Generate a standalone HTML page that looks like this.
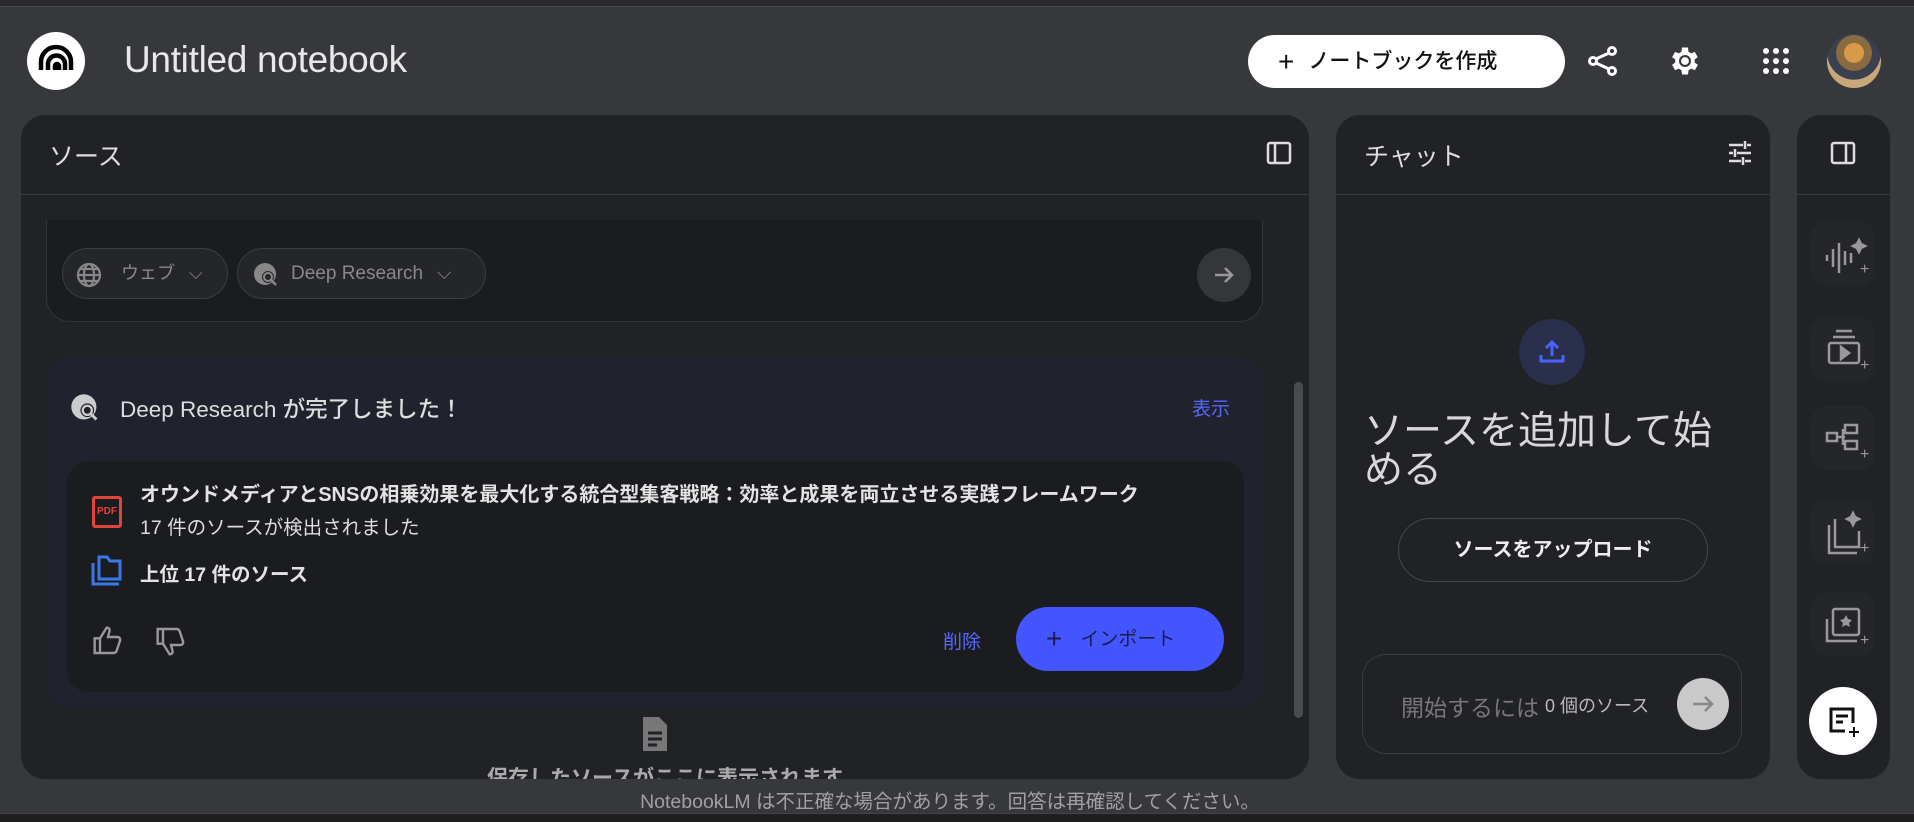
<!DOCTYPE html>
<html><head><meta charset="utf-8"><style>
*{box-sizing:border-box;margin:0;padding:0}
body{width:1914px;height:822px;background:#37383c;font-family:"Liberation Sans","Noto Sans CJK JP",sans-serif;color:#e3e3e3;position:relative;overflow:hidden}
.abs{position:absolute}
.panel{position:absolute;background:#212226;border-radius:24px;overflow:hidden}
.hdr{position:absolute;left:0;right:0;top:0;height:80px;border-bottom:1px solid #3a3b3f}
svg{display:block}
</style></head><body>
<div class="abs" style="left:0;top:0;width:1914px;height:7px;background:#2a2a2c;border-bottom:1px solid #4a4a4a"></div>
<div class="abs" style="left:0;top:813px;width:1914px;height:9px;background:#1f1f20;border-top:1px solid #444"></div>

<div class="abs" style="left:27px;top:32px;width:58px;height:58px;border-radius:50%;background:#fff">
<svg width="58" height="58" viewBox="0 0 58 58"><g fill="none" stroke="#000" stroke-width="4.5"><path d="M14 38 V30 A15 15 0 0 1 44 30 V38"/><path d="M21 38 V32 A8.5 8.5 0 0 1 38 32 V38"/><path d="M28 38 V34 A2 2 0 0 1 32 34 V38"/></g></svg></div>
<div class="abs" style="left:124px;top:39px;font-size:37px;color:#e8e8e8;letter-spacing:-0.3px">Untitled notebook</div>

<div class="abs" style="left:1248px;top:35px;width:317px;height:53px;border-radius:27px;background:#fff;color:#111;font-size:21px;line-height:53px;padding-left:30px;font-weight:500"><span style="font-size:28px;vertical-align:-3px;margin-right:14px">+</span>ノートブックを作成</div>
<svg class="abs" style="left:1586px;top:44px" width="34" height="34" viewBox="0 0 34 34"><g fill="none" stroke="#fff" stroke-width="3"><circle cx="26" cy="7" r="3.5"/><circle cx="26" cy="27" r="3.5"/><circle cx="7" cy="17" r="3.5"/><path d="M10 15 L23 9 M10 19 L23 25"/></g></svg>
<svg class="abs" style="left:1667px;top:43px" width="36" height="36" viewBox="0 0 24 24"><path fill="#fff" d="M19.4 13a7.5 7.5 0 0 0 0-2l2.1-1.6-2-3.5-2.5 1a7 7 0 0 0-1.7-1L15 3h-4l-.4 2.9a7 7 0 0 0-1.7 1l-2.5-1-2 3.5L6.5 11a7.5 7.5 0 0 0 0 2l-2.1 1.6 2 3.5 2.5-1a7 7 0 0 0 1.7 1L11 21h4l.4-2.9a7 7 0 0 0 1.7-1l2.5 1 2-3.5zM13 16a4 4 0 1 1 0-8 4 4 0 0 1 0 8z" transform="translate(-1 0)"/><circle cx="12" cy="12" r="2.6" fill="#fff"/></svg>
<svg class="abs" style="left:1762px;top:47px" width="28" height="28" viewBox="0 0 28 28"><g fill="#fff"><circle cx="4" cy="4" r="3"/><circle cx="14" cy="4" r="3"/><circle cx="24" cy="4" r="3"/><circle cx="4" cy="14" r="3"/><circle cx="14" cy="14" r="3"/><circle cx="24" cy="14" r="3"/><circle cx="4" cy="24" r="3"/><circle cx="14" cy="24" r="3"/><circle cx="24" cy="24" r="3"/></g></svg>
<div class="abs" style="left:1827px;top:34px;width:54px;height:54px;border-radius:50%;background:radial-gradient(circle at 50% 35%,#d89a48 0 22%,#8a6a40 23% 40%,#3a4050 41% 60%,#c8a878 61%)"></div>

<div class="panel" style="left:21px;top:115px;width:1288px;height:664px">
 <div class="hdr"><div class="abs" style="left:28px;top:22px;font-size:25px;color:#ddd">ソース</div>
 <svg class="abs" style="left:1245px;top:25px" width="26" height="26" viewBox="0 0 26 26"><g fill="none" stroke="#ddd" stroke-width="2.5"><rect x="2" y="3" width="22" height="20" rx="2"/><path d="M9 3v20"/></g></svg></div>
 <div class="abs" style="left:25px;top:105px;width:1217px;height:102px;background:#1b1c1f;border:1px solid #34353a;border-top:none;border-radius:0 0 24px 24px">
  <div class="abs" style="left:15px;top:28px;width:166px;height:51px;border:1px solid #3c3d41;border-radius:26px;background:#25262a;color:#888;font-size:18px;line-height:49px;padding-left:58px">ウェブ<span style="margin-left:14px">⌵</span></div>
  <svg class="abs" style="left:29px;top:42px" width="26" height="26" viewBox="0 0 26 26"><g fill="none" stroke="#888" stroke-width="2.2"><circle cx="13" cy="13" r="11"/><ellipse cx="13" cy="13" rx="5" ry="11"/><path d="M2 13h22M4 7h18M4 19h18"/></g></svg>
  <div class="abs" style="left:190px;top:28px;width:249px;height:51px;border:1px solid #3c3d41;border-radius:26px;background:#25262a;color:#888;font-size:19px;line-height:49px;padding-left:53px">Deep Research<span style="margin-left:14px">⌵</span></div>
  <svg class="abs" style="left:205px;top:41px" width="28" height="28" viewBox="0 0 28 28"><circle cx="13" cy="13" r="11" fill="#888"/><circle cx="16" cy="16" r="6" fill="#25262a"/><circle cx="16" cy="16" r="4" fill="none" stroke="#888" stroke-width="2"/><path d="M19 19l5 5" stroke="#888" stroke-width="2.5"/></svg>
  <div class="abs" style="left:1150px;top:28px;width:54px;height:54px;border-radius:50%;background:#35363a"></div>
  <svg class="abs" style="left:1163px;top:41px" width="28" height="28" viewBox="0 0 28 28"><path d="M5 14h17M15 7l7 7-7 7" fill="none" stroke="#999" stroke-width="2.5"/></svg>
 </div>
 <div class="abs" style="left:25px;top:240px;width:1217px;height:353px;background:#20222d;border-radius:24px">
  <svg class="abs" style="left:23px;top:37px" width="32" height="32" viewBox="0 0 28 28"><circle cx="13" cy="13" r="11" fill="#ccc"/><circle cx="16" cy="16" r="6" fill="#20222d"/><circle cx="16" cy="16" r="4" fill="none" stroke="#ccc" stroke-width="2"/><path d="M19 19l5 5" stroke="#ccc" stroke-width="2.5"/></svg>
  <div class="abs" style="left:74px;top:37px;font-size:22.5px;color:#ddd;font-weight:500">Deep Research が完了しました！</div>
  <div class="abs" style="left:1146px;top:39px;font-size:19px;color:#5468ff">表示</div>
  <div class="abs" style="left:21px;width:1177px;height:231px;background:#1b1c20;border-radius:22px;top:106px">
   <div class="abs" style="left:25px;top:35px;width:30px;height:32px;border:3px solid #e0443a;border-radius:3px;color:#e0443a;font-size:10px;font-weight:bold;line-height:26px;text-align:center">PDF</div>
   <div class="abs" style="left:73px;top:17px;font-size:20px;color:#e3e3e3;font-weight:600">オウンドメディアとSNSの相乗効果を最大化する統合型集客戦略：効率と成果を両立させる実践フレームワーク</div>
   <div class="abs" style="left:73px;top:50px;font-size:19.5px;color:#ddd">17 件のソースが検出されました</div>
   <svg class="abs" style="left:19px;top:92px" width="40" height="36" viewBox="0 0 40 36"><g fill="none" stroke="#3b78e7" stroke-width="3"><path d="M13 4h8l3 4h10v18H13z"/><path d="M7 10v21h26"/></g></svg>
   <div class="abs" style="left:73px;top:97px;font-size:19.5px;color:#e3e3e3;font-weight:600">上位 17 件のソース</div>
   <svg class="abs" style="left:25px;top:164px" width="32" height="32" viewBox="0 0 24 24"><path d="M2 10h4v11H2zM6 10l5-8c2 0 2.5 1.5 2 3l-1 4h7c1.5 0 2.5 1.3 2 2.8l-2.5 7.5c-.4 1-1.2 1.7-2.3 1.7H6" fill="none" stroke="#999" stroke-width="1.8"/></svg>
   <svg class="abs" style="left:88px;top:164px" width="32" height="32" viewBox="0 0 24 24"><g transform="matrix(1 0 0 -1 0 24)"><path d="M2 10h4v11H2zM6 10l5-8c2 0 2.5 1.5 2 3l-1 4h7c1.5 0 2.5 1.3 2 2.8l-2.5 7.5c-.4 1-1.2 1.7-2.3 1.7H6" fill="none" stroke="#999" stroke-width="1.8"/></g></svg>
   <div class="abs" style="left:876px;top:166px;font-size:19px;color:#5468ff">削除</div>
   <div class="abs" style="left:949px;top:146px;width:208px;height:64px;border-radius:32px;background:#4355ff;color:#1a1d4a;font-size:19px;line-height:64px;padding-left:30px"><span style="font-size:28px;vertical-align:-3px;margin-right:18px">+</span>インポート</div>
  </div>
 </div>
 <div class="abs" style="left:1273px;top:267px;width:9px;height:336px;background:#4a4b4f;border-radius:5px"></div>
 <svg class="abs" style="left:620px;top:600px" width="28" height="38" viewBox="0 0 28 38"><path d="M2 2h16l8 8v26H2z" fill="#777"/><path d="M7 18h14M7 24h14M7 30h9" stroke="#212226" stroke-width="3"/></svg>
 <div class="abs" style="left:0;width:1288px;top:647px;text-align:center;font-size:21px;color:#aaa;font-weight:600">保存したソースがここに表示されます</div>
</div>

<div class="abs" style="left:0;width:1914px;top:785px;text-align:center;font-size:19.5px;color:#a0a0a0;padding-right:14px">NotebookLM は不正確な場合があります。回答は再確認してください。</div>

<div class="panel" style="left:1336px;top:115px;width:434px;height:664px">
 <div class="hdr"><div class="abs" style="left:28px;top:22px;font-size:25px;color:#ddd">チャット</div>
 <svg class="abs" style="left:391px;top:25px" width="26" height="26" viewBox="0 0 26 26"><g stroke="#ddd" stroke-width="2.5"><path d="M2 5h14M20 5h4M18 1v8M2 13h4M10 13h14M8 9v8M2 21h12M18 21h6M16 17v8"/></g></svg></div>
 <div class="abs" style="left:183px;top:204px;width:66px;height:66px;border-radius:50%;background:#2a2f4c"></div>
 <svg class="abs" style="left:202px;top:222px" width="28" height="28" viewBox="0 0 28 28"><g fill="none" stroke="#4a62ff" stroke-width="3"><path d="M14 19V5M8 11l6-6 6 6M3 18v6h22v-6"/></g></svg>
 <div class="abs" style="left:28px;top:297px;width:380px;font-size:39px;line-height:39px;color:#d8d8d8">ソースを追加して始める</div>
 <div class="abs" style="left:62px;top:403px;width:310px;height:64px;border:1px solid #46474b;border-radius:32px;text-align:center;line-height:62px;font-size:20px;font-weight:700;color:#eee">ソースをアップロード</div>
 <div class="abs" style="left:26px;top:539px;width:380px;height:100px;border:1px solid #3a3b3f;border-radius:24px">
  <div class="abs" style="left:38px;top:34px;font-size:23px;color:#777;white-space:nowrap">開始するには</div>
  <div class="abs" style="left:182px;top:37px;font-size:18px;color:#bbb;white-space:nowrap;background:#212226">0 個のソース</div>
  <div class="abs" style="left:314px;top:23px;width:52px;height:52px;border-radius:50%;background:#c9c9c9"></div>
  <svg class="abs" style="left:326px;top:35px" width="28" height="28" viewBox="0 0 28 28"><path d="M4 14h19M16 7l7 7-7 7" fill="none" stroke="#888" stroke-width="2.5"/></svg>
 </div>
</div>

<div class="panel" style="left:1797px;top:115px;width:93px;height:664px">
 <div class="hdr"><svg class="abs" style="left:33px;top:25px" width="26" height="26" viewBox="0 0 26 26"><g fill="none" stroke="#ddd" stroke-width="2.5"><rect x="2" y="3" width="22" height="20" rx="2"/><path d="M16 3v20"/></g></svg></div>
 <div class="abs" style="left:14px;top:106px;width:64px;height:64px;border-radius:16px;background:#25262a"></div>
 <div class="abs" style="left:14px;top:202px;width:64px;height:64px;border-radius:16px;background:#25262a"></div>
 <div class="abs" style="left:14px;top:291px;width:64px;height:64px;border-radius:16px;background:#25262a"></div>
 <div class="abs" style="left:14px;top:385px;width:64px;height:64px;border-radius:16px;background:#25262a"></div>
 <div class="abs" style="left:14px;top:477px;width:64px;height:64px;border-radius:16px;background:#25262a"></div>
 <svg class="abs" style="left:0;top:0" width="93" height="664" viewBox="0 0 93 664"><g fill="none" stroke="#999" stroke-width="2.5">
  <path d="M30 140v6M36 134v18M42 128v30M48 136v14M54 138v10"/><path d="M62 125l2 4 4 2-4 2-2 4-2-4-4-2 4-2z" fill="#999"/>
  <rect x="32" y="228" width="30" height="20" rx="2"/><path d="M36 222h22M39 216h16"/><path d="M44 232l8 6-8 6z" fill="#999"/>
  <rect x="30" y="318" width="10" height="8"/><rect x="48" y="310" width="12" height="8"/><rect x="48" y="326" width="12" height="8"/><path d="M40 322h8M46 314v16"/>
  <path d="M32 410v28h28M38 404v28h24v-16"/><path d="M56 398l2 4 4 2-4 2-2 4-2-4-4-2 4-2z" fill="#999"/>
  <path d="M30 504v22h30"/><rect x="36" y="494" width="26" height="26" rx="2"/><path d="M49 500l2 4 4 1-3 3 1 4-4-2-4 2 1-4-3-3 4-1z" fill="#999" stroke="none"/>
 </g><g fill="#999" font-size="16" font-family="Liberation Sans"><text x="63" y="159">+</text><text x="63" y="255">+</text><text x="63" y="344">+</text><text x="63" y="438">+</text><text x="63" y="530">+</text></g></svg>
 <div class="abs" style="left:12px;top:572px;width:68px;height:68px;border-radius:50%;background:#fff"></div>
 <svg class="abs" style="left:30px;top:590px" width="34" height="34" viewBox="0 0 34 34"><g fill="none" stroke="#111" stroke-width="3"><path d="M26 18V4H4v22h14"/><path d="M9 11h12M9 17h7"/><path d="M27 22v10M22 27h10" stroke-width="2"/></g></svg>
</div>
</body></html>
